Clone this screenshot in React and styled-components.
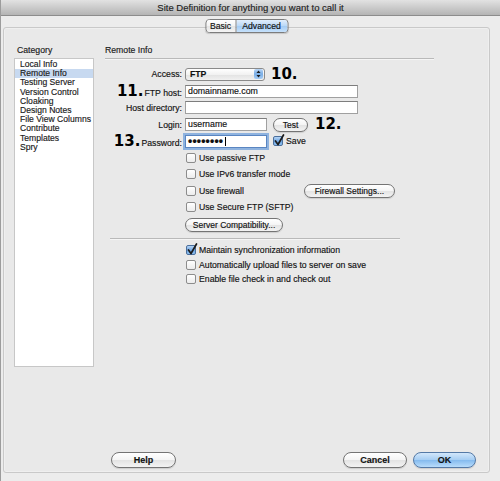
import React from 'react'
import styled, { createGlobalStyle } from 'styled-components'

const GlobalStyle = createGlobalStyle`
  html, body {
    margin: 0;
    padding: 0;
    background: #ececec;
  }
  body {
    font-family: "Liberation Sans", Arial, sans-serif;
    color: #111;
    -webkit-text-stroke: 0.15px currentColor;
  }
`

const Window = styled.div`
  width: 500px;
  height: 481px;
  box-sizing: border-box;
  border-left: 1px solid #9c9c9c;
  background: #ececec;
  display: flex;
  flex-direction: column;
  overflow: hidden;
`

const TitleBar = styled.div`
  height: 16px;
  box-sizing: border-box;
  background: linear-gradient(#e2e2e2, #b4b4b4);
  border-bottom: 1px solid #8c8c8c;
  text-align: center;
  font-size: 9.5px;
  line-height: 15px;
  color: #222;
`

const Body = styled.div`
  flex: 1;
  display: flex;
  padding: 11px 10px 8px 2px;
`

const GroupBox = styled.div`
  position: relative;
  flex: 1;
  display: flex;
  flex-direction: column;
  border: 1px solid #c9c9c9;
  border-radius: 3px;
  background: #e9e9e9;
  box-shadow: inset 0 0 0 1px #efefef;
`

const Tabs = styled.div`
  position: absolute;
  top: -9px;
  left: 50%;
  transform: translateX(-50%);
  display: flex;
  height: 14px;
  box-sizing: border-box;
  border: 1px solid #7c7c7c;
  border-radius: 4px;
  overflow: hidden;
  box-shadow: 0 1px 1px rgba(0, 0, 0, 0.15);
`

const Tab = styled.div`
  width: ${p => p.$w}px;
  font-size: 8.7px;
  line-height: 12px;
  text-align: center;
  color: #111;
  background: ${p => p.$active
    ? 'linear-gradient(#e1eefc, #b9d8f7 50%, #a3cbf3 51%, #c6e1fb)'
    : 'linear-gradient(#ffffff, #f3f3f3 50%, #e4e4e4 51%, #f4f4f4)'};
  & + & {
    border-left: 1px solid #8a8a8a;
  }
`

const Content = styled.div`
  flex: 1;
  display: flex;
  padding: 17px 0 0 10px;
`

const CategoryColumn = styled.div`
  width: 80px;
  display: flex;
  flex-direction: column;
`

const SectionLabel = styled.div`
  font-size: 8.7px;
  line-height: 10px;
  height: 10px;
  padding-left: ${p => p.$indent || 0}px;
  color: #1a1a1a;
`

const CategoryList = styled.ul`
  list-style: none;
  margin: 3px 0 0;
  padding: 1px 0 0;
  height: 309px;
  box-sizing: border-box;
  background: #fff;
  border: 1px solid #c7c7c7;
`

const CategoryItem = styled.li`
  font-size: 8.6px;
  line-height: 9.2px;
  height: 9.2px;
  padding-left: 5px;
  color: #1a1a1a;
  background: ${p => (p.$selected ? '#c7d9f0' : 'transparent')};
`

const SettingsColumn = styled.div`
  margin-left: 11px;
  width: 329px;
  display: flex;
  flex-direction: column;
`

const Rule = styled.div`
  margin: ${p => p.$mt || 0}px 0 ${p => p.$mb || 0}px ${p => p.$ml || 0}px;
  width: ${p => p.$w}px;
  height: 1px;
  background: #b9b9b9;
  border-bottom: 1px solid #f5f5f5;
`

const Form = styled.div`
  display: flex;
  flex-direction: column;
  padding-top: 6px;
`

const Row = styled.div`
  height: ${p => p.$h}px;
  display: flex;
  align-items: center;
  padding-left: ${p => p.$indent || 0}px;
`

const Label = styled.div`
  width: 77px;
  margin-right: 3px;
  display: flex;
  justify-content: flex-end;
  align-items: baseline;
  font-size: 8.7px;
  white-space: nowrap;
`

const Callout = styled.span`
  font-family: "DejaVu Sans", Verdana, sans-serif;
  font-weight: bold;
  font-size: 15px;
  line-height: 15px;
  color: #000;
  -webkit-text-stroke: 0;
  margin-left: ${p => p.$ml || 0}px;
  margin-right: ${p => p.$mr || 0}px;
`

const TextField = styled.div`
  width: ${p => p.$w}px;
  height: 13px;
  box-sizing: border-box;
  background: #fff;
  border: 1px solid #a0a0a0;
  border-top-color: #7d7d7d;
  font-size: 8.8px;
  line-height: 11px;
  padding-left: 2px;
  display: flex;
  align-items: center;
  color: #111;
  ${p => p.$focused && `
    border-color: #5a86c2;
    box-shadow: 0 0 0 2px #8fb3df;
  `}
`

const Dots = styled.span`
  font-size: 12px;
  font-weight: bold;
  letter-spacing: 0.2px;
  line-height: 11px;
`

const Caret = styled.span`
  width: 1px;
  height: 9px;
  margin-left: 2px;
  background: #000;
`

const Select = styled.div`
  width: 80px;
  height: 13px;
  box-sizing: border-box;
  border: 1px solid #8a8a8a;
  border-radius: 3px;
  background: linear-gradient(#ffffff, #f2f2f2 50%, #e2e2e2 51%, #f1f1f1);
  display: flex;
  align-items: center;
  justify-content: space-between;
  padding: 0 1px 0 4px;
  font-size: 8.7px;
  font-weight: bold;
  color: #111;
`

const Button = styled.div`
  width: ${p => p.$w}px;
  height: ${p => p.$h || 14}px;
  box-sizing: border-box;
  border: 1px solid #747474;
  border-radius: 8px;
  background: ${p => p.$primary
    ? 'linear-gradient(#d2e7fb, #a5cdf3 50%, #84baee 51%, #b8dcfb)'
    : 'linear-gradient(#ffffff, #f4f4f4 50%, #e3e3e3 51%, #f3f3f3)'};
  border-color: ${p => (p.$primary ? '#5479a6' : '#747474')};
  box-shadow: 0 1px 1px rgba(0, 0, 0, 0.12);
  display: flex;
  align-items: center;
  justify-content: center;
  font-size: ${p => (p.$large ? 9 : 8.5)}px;
  font-weight: ${p => (p.$large ? 'bold' : 'normal')};
  color: #111;
  margin-left: ${p => p.$ml || 0}px;
`

const CheckLabel = styled.label`
  display: flex;
  align-items: center;
  font-size: 8.7px;
  white-space: nowrap;
  margin-left: ${p => p.$ml || 0}px;
`

const Box = styled.span`
  position: relative;
  width: 10px;
  height: 10px;
  box-sizing: border-box;
  margin-right: 3px;
  border: 1px solid ${p => (p.$checked ? '#4b6f9c' : '#8c8c8c')};
  border-radius: 2px;
  background: ${p => p.$checked
    ? 'linear-gradient(#b5d4f5, #6fa6e3 55%, #8ec0f0)'
    : 'linear-gradient(#ffffff, #ececec)'};
  svg {
    position: absolute;
    left: 0;
    top: -3px;
  }
`

const Footer = styled.div`
  display: flex;
  align-items: center;
  padding: 0 13px 4px 107px;
`

const FooterSpacer = styled.div`
  flex: 1;
`

function Checkbox({ checked, children, ml }) {
  return (
    <CheckLabel $ml={ml}>
      <Box $checked={checked}>
        {checked && (
          <svg width="11" height="12" viewBox="0 0 11 12">
            <path d="M1.5 7 L4 10.5 L9.5 1" fill="none" stroke="#1c1c1c" strokeWidth="1.7" strokeLinecap="round" strokeLinejoin="round" />
          </svg>
        )}
      </Box>
      {children}
    </CheckLabel>
  )
}

function Stepper() {
  return (
    <svg width="9" height="10" viewBox="0 0 9 10">
      <defs>
        <linearGradient id="stp" x1="0" y1="0" x2="0" y2="1">
          <stop offset="0" stopColor="#b9d6f6" />
          <stop offset="0.5" stopColor="#79ade6" />
          <stop offset="1" stopColor="#a6cdf5" />
        </linearGradient>
      </defs>
      <rect x="0" y="0" width="9" height="10" rx="2" fill="url(#stp)" />
      <path d="M4.5 1.5 L6.5 4 L2.5 4 Z" fill="#1a1a1a" />
      <path d="M4.5 8.5 L6.5 6 L2.5 6 Z" fill="#1a1a1a" />
    </svg>
  )
}

const categories = [
  'Local Info',
  'Remote Info',
  'Testing Server',
  'Version Control',
  'Cloaking',
  'Design Notes',
  'File View Columns',
  'Contribute',
  'Templates',
  'Spry',
]

export default function App() {
  return (
    <>
      <GlobalStyle />
      <Window>
        <TitleBar>Site Definition for anything you want to call it</TitleBar>
        <Body>
          <GroupBox>
            <Tabs>
              <Tab $w={29}>Basic</Tab>
              <Tab $w={51} $active>Advanced</Tab>
            </Tabs>
            <Content>
              <CategoryColumn>
                <SectionLabel $indent={3}>Category</SectionLabel>
                <CategoryList>
                  {categories.map(c => (
                    <CategoryItem key={c} $selected={c === 'Remote Info'}>{c}</CategoryItem>
                  ))}
                </CategoryList>
              </CategoryColumn>
              <SettingsColumn>
                <SectionLabel>Remote Info</SectionLabel>
                <Rule $mt={3} $w={329} />
                <Form>
                  <Row $h={16.75}>
                    <Label>Access:</Label>
                    <Select>FTP<Stepper /></Select>
                    <Callout $ml={6}>10.</Callout>
                  </Row>
                  <Row $h={16.75}>
                    <Label><Callout $mr={1}>11.</Callout>FTP host:</Label>
                    <TextField $w={173}>domainname.com</TextField>
                  </Row>
                  <Row $h={16.75}>
                    <Label>Host directory:</Label>
                    <TextField $w={173} />
                  </Row>
                  <Row $h={16.75}>
                    <Label>Login:</Label>
                    <TextField $w={82}>username</TextField>
                    <Button $w={35} $ml={6}>Test</Button>
                    <Callout $ml={7}>12.</Callout>
                  </Row>
                  <Row $h={16.75}>
                    <Label><Callout $mr={1}>13.</Callout>Password:</Label>
                    <TextField $w={82} $focused><Dots>••••••••</Dots><Caret /></TextField>
                    <Checkbox checked ml={6}>Save</Checkbox>
                  </Row>
                  <Row $h={16} $indent={81}><Checkbox>Use passive FTP</Checkbox></Row>
                  <Row $h={16} $indent={81}><Checkbox>Use IPv6 transfer mode</Checkbox></Row>
                  <Row $h={18} $indent={81}>
                    <Checkbox>Use firewall</Checkbox>
                    <Button $w={91} $ml={60}>Firewall Settings...</Button>
                  </Row>
                  <Row $h={14} $indent={81}><Checkbox>Use Secure FTP (SFTP)</Checkbox></Row>
                  <Row $h={22} $indent={80}>
                    <Button $w={98}>Server Compatibility...</Button>
                  </Row>
                  <Rule $mt={2} $mb={3} $ml={5} $w={290} />
                  <Row $h={14.5} $indent={81}>
                    <Checkbox checked>Maintain synchronization information</Checkbox>
                  </Row>
                  <Row $h={14.5} $indent={81}>
                    <Checkbox>Automatically upload files to server on save</Checkbox>
                  </Row>
                  <Row $h={14.5} $indent={81}>
                    <Checkbox>Enable file check in and check out</Checkbox>
                  </Row>
                </Form>
              </SettingsColumn>
            </Content>
            <Footer>
              <Button $w={65} $h={16} $large>Help</Button>
              <FooterSpacer />
              <Button $w={64} $h={16} $large>Cancel</Button>
              <Button $w={63} $h={16} $ml={6} $large $primary>OK</Button>
            </Footer>
          </GroupBox>
        </Body>
      </Window>
    </>
  )
}
